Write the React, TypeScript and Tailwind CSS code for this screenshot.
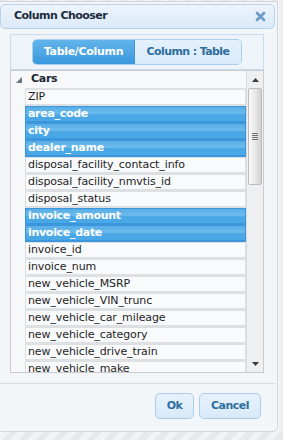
import React from "react";

const items: { name: string; sel?: boolean }[] = [
  { name: "ZIP" },
  { name: "area_code", sel: true },
  { name: "city", sel: true },
  { name: "dealer_name", sel: true },
  { name: "disposal_facility_contact_info" },
  { name: "disposal_facility_nmvtis_id" },
  { name: "disposal_status" },
  { name: "invoice_amount", sel: true },
  { name: "invoice_date", sel: true },
  { name: "invoice_id" },
  { name: "invoice_num" },
  { name: "new_vehicle_MSRP" },
  { name: "new_vehicle_VIN_trunc" },
  { name: "new_vehicle_car_mileage" },
  { name: "new_vehicle_category" },
  { name: "new_vehicle_drive_train" },
  { name: "new_vehicle_make" },
];

export default function App() {
  return (
    <div
      className="w-[283px] h-[440px] overflow-hidden bg-[repeating-linear-gradient(135deg,#e6e9ec_0px,#e6e9ec_6px,#f1f3f5_6px,#f1f3f5_12px)] text-[#1e1e1e]"
      style={{ fontFamily: '"DejaVu Sans", Verdana, sans-serif' }}
    >
      <div className="flex h-[432px]">
        <div className="ml-[-3px] mt-[1px] w-[281px] h-[431px] shrink-0 rounded-b-[5px] border border-[#cfd5db] bg-[#f3f6f9] p-[2px] flex flex-col">
          {/* title bar */}
          <div className="h-[25px] shrink-0 rounded-[5px] border border-[#b9d3ea] bg-[linear-gradient(#ecf4fc,#dceaf8)] flex items-center justify-between pl-[13px] pr-[8px]">
            <span className="text-[11px] font-bold tracking-[-0.55px] text-[#1c2b3a]">Column Chooser</span>
            <svg width="11" height="11" viewBox="0 0 11 11">
              <path d="M2 2 L9 9 M9 2 L2 9" stroke="#6f9cca" strokeWidth="2.8" strokeLinecap="round" />
            </svg>
          </div>
          {/* content */}
          <div className="pt-[5px] pl-[10px] pr-[11px] flex flex-col">
            <div className="h-[36px] border border-[#c8dcee] bg-[#eef4fa] flex items-center justify-center">
              <div className="flex h-[26px] w-[210px] rounded-[5px] overflow-hidden border border-[#a9cdea] text-[11px] font-bold">
                <div className="w-[102px] flex items-center justify-center tracking-[-0.3px] text-white bg-[linear-gradient(#62b4ea,#3a98df)] border-r border-[#3d95da]">
                  Table/Column
                </div>
                <div className="flex-1 flex items-center justify-center tracking-[-0.6px] text-[#2e6e9e] bg-[linear-gradient(#e4f1fc,#d9ebfb)]">
                  Column : Table
                </div>
              </div>
            </div>
            {/* list */}
            <div className="h-[303px] border border-[#c9cccf] bg-[#f6f8fa] flex overflow-hidden">
              <div className="flex-1 flex flex-col overflow-hidden">
                <div className="h-[17px] shrink-0 flex items-center">
                  <svg width="6" height="6" viewBox="0 0 6 6" className="ml-[5px]">
                    <path d="M6 0 L6 6 L0 6 Z" fill="#6a7480" />
                  </svg>
                  <span className="ml-[9px] text-[11px] font-bold tracking-[-0.3px] text-[#1b2633]">Cars</span>
                </div>
                <div className="ml-[14px] bg-[#dfe1e4] flex flex-col gap-[1px] pt-[1px]">
                  {items.map((it) =>
                    it.sel ? (
                      <div
                        key={it.name}
                        className="h-[16px] shrink-0 border border-[#3b96dc] bg-[linear-gradient(#5aaee6_0%,#6bbbee_45%,#4aa7e5_55%,#4ba8e6_100%)] shadow-[0_1px_0_#3b96dc] flex items-center pl-[2px] text-[11px] font-bold tracking-[-0.3px] text-white whitespace-nowrap overflow-hidden"
                      >
                        {it.name}
                      </div>
                    ) : (
                      <div
                        key={it.name}
                        className="h-[16px] shrink-0 border border-[#dcdfe2] bg-[#f9fafc] flex items-center pl-[2px] text-[11px] tracking-[-0.1px] text-[#1e1e1e] whitespace-nowrap overflow-hidden"
                      >
                        {it.name}
                      </div>
                    )
                  )}
                </div>
              </div>
              {/* scrollbar */}
              <div className="w-[17px] shrink-0 border-l border-[#d9dcdf] bg-[#eeeff0] flex flex-col items-center">
                <div className="h-[17px] flex items-center justify-center">
                  <svg width="7" height="4" viewBox="0 0 7 4">
                    <path d="M0 4 L3.5 0 L7 4 Z" fill="#3a3a3a" />
                  </svg>
                </div>
                <div className="w-[14px] h-[97px] rounded-[2px] border border-[#b9bcbf] bg-[linear-gradient(90deg,#fafafa,#e4e4e4_60%,#d0d0d0)] flex items-center justify-center">
                  <div className="flex flex-col gap-[1px]">
                    <div className="w-[6px] h-px bg-[#6e6e6e]" />
                    <div className="w-[6px] h-px bg-[#6e6e6e]" />
                    <div className="w-[6px] h-px bg-[#6e6e6e]" />
                    <div className="w-[6px] h-px bg-[#6e6e6e]" />
                  </div>
                </div>
                <div className="flex-1" />
                <div className="h-[17px] flex items-center justify-center">
                  <svg width="7" height="4" viewBox="0 0 7 4">
                    <path d="M0 0 L7 0 L3.5 4 Z" fill="#3a3a3a" />
                  </svg>
                </div>
              </div>
            </div>
          </div>
          {/* footer */}
          <div className="mt-[10px] border-t border-[#d6dce2] flex justify-end gap-[5px] pt-[9px] pr-[14px]">
            <button className="w-[39px] h-[26px] rounded-[5px] border border-[#a9cdea] bg-[linear-gradient(#e6f2fc,#d8eafa)] text-[11px] font-bold tracking-[-0.5px] text-[#2e6e9e]">
              Ok
            </button>
            <button className="w-[62px] h-[26px] rounded-[5px] border border-[#a9cdea] bg-[linear-gradient(#e6f2fc,#d8eafa)] text-[11px] font-bold tracking-[-0.5px] text-[#2e6e9e]">
              Cancel
            </button>
          </div>
        </div>
        <div className="flex-1 bg-[#eceff2] border-l border-[#f7f8f9]" />
      </div>
    </div>
  );
}
